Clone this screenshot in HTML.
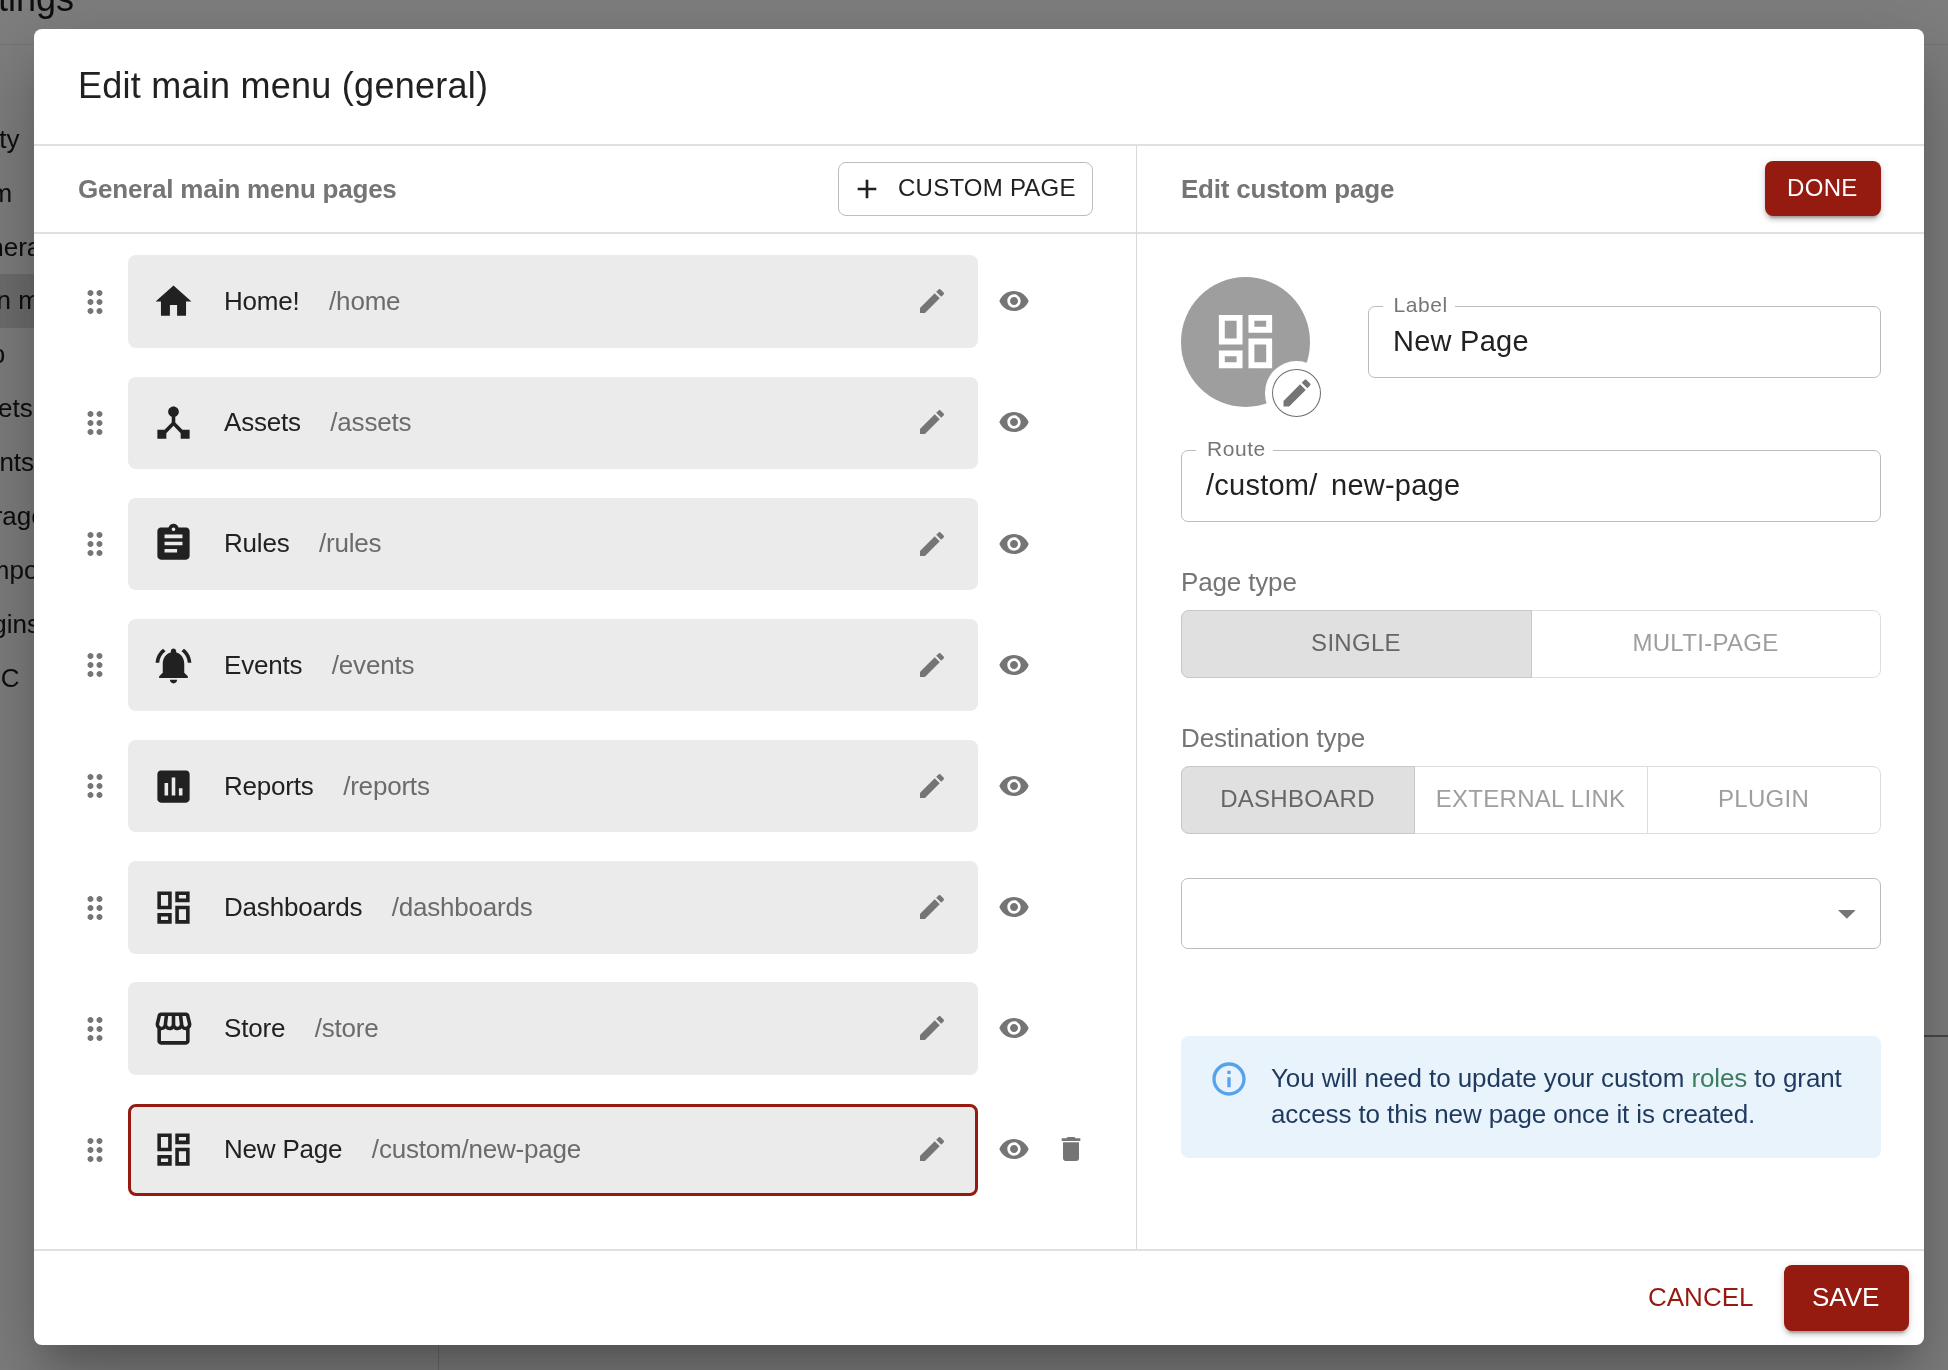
<!DOCTYPE html>
<html lang="en">
<head>
<meta charset="utf-8">
<title>Edit main menu (general)</title>
<style>
*{box-sizing:border-box;margin:0;padding:0}
html,body{width:1948px;height:1370px;overflow:hidden}
body{position:relative;background:#7f7f7f;font-family:"Liberation Sans",Arial,Helvetica,sans-serif;color:#212121;-webkit-font-smoothing:antialiased}
.abs{position:absolute}
svg{display:block;position:absolute}
/* background page (under backdrop) */
.bg-title{left:-56px;top:-22.6px;font-size:36px;line-height:44px;color:#0e0e0e;white-space:nowrap}
.bg-hline{left:0;top:44px;width:1948px;height:1px;background:#747474}
.bg-vline{left:438px;top:1300px;width:1px;height:70px;background:#6e6e6e}
.bg-hline2{left:1900px;top:1035px;width:48px;height:2px;background:#4a4a4a}
.bg-sel{left:0;top:274px;width:60px;height:54px;background:#707070}
.side{left:0;width:34px;height:54px;overflow:hidden;font-size:26px;line-height:54px;color:#0e0e0e;white-space:nowrap}
/* dialog */
.dialog{left:34px;top:29px;width:1890px;height:1316px;background:#fff;border-radius:8px;
 box-shadow:0 22px 30px -14px rgba(0,0,0,.2),0 48px 76px 6px rgba(0,0,0,.14),0 18px 92px 16px rgba(0,0,0,.12)}
.title{left:78px;top:64px;font-size:36px;line-height:44px;white-space:nowrap;color:#212121;letter-spacing:.25px}
.hl{background:#e0e0e0;height:2px}
.vl{background:#e0e0e0;width:2px}
.sub{font-weight:700;font-size:26px;line-height:32px;color:#757575;white-space:nowrap;letter-spacing:-.22px}
.btn{border-radius:8px}
.btn.out{border:1px solid #bdbdbd}
.btxt{font-size:24px;line-height:32px;white-space:nowrap}
.fbtxt{font-size:26px;line-height:32px;white-space:nowrap}
.btn.red{background:#951b10;color:#fff;box-shadow:0 6px 2px -4px rgba(0,0,0,.2),0 4px 4px 0 rgba(0,0,0,.14),0 2px 10px 0 rgba(0,0,0,.12)}
/* list */
.item{left:128px;width:850px;height:92px;background:#ebebeb;border-radius:8px}
.item.sel{border:3px solid #951b10}
.lbl{font-size:26px;line-height:32px;white-space:nowrap;color:#212121;letter-spacing:-.2px}
.rt{color:#6b6b6b;margin-left:29.5px}
/* right panel */
.field{border:1px solid #bcbcbc;border-radius:7px}
.flabel{font-size:21px;line-height:24px;color:#757575;background:#fff;padding:0 0 0 11px;white-space:nowrap;letter-spacing:.55px}
.ftext{font-size:29px;line-height:36px;white-space:nowrap;color:#212121;letter-spacing:.25px}
.cap{font-size:26px;line-height:32px;color:#757575;white-space:nowrap;letter-spacing:-.15px}
.tg{border:1px solid #dedede;border-radius:8px}
.tb{top:-1px;height:68px;padding-right:1px;font-size:24px;line-height:65px;text-align:center;color:#9e9e9e;white-space:nowrap;letter-spacing:.3px}
.tb.on{background:#e0e0e0;color:#666;border:1px solid #c8c8c8;border-radius:8px 0 0 8px;left:-1px;line-height:63px}
.tb.mid{border-right:1px solid #dedede}
.alert{left:1181px;top:1036px;width:700px;height:122px;background:#e9f3fc;border-radius:8px}
.atext{left:1271px;top:1060px;font-size:26px;line-height:36px;color:#1f3a5f;white-space:nowrap;letter-spacing:-.1px}
.atext span{color:#3c7c60}
</style>
</head>
<body>
<div id="root" style="position:absolute;left:0;top:0;width:1948px;height:1370px;overflow:hidden;will-change:transform">
<!-- page behind the backdrop -->
<div class="abs bg-title">Settings</div>
<div class="abs bg-hline"></div>
<div class="abs bg-vline"></div>
<div class="abs bg-hline2"></div>
<div class="abs bg-sel"></div>
<div class="abs side" style="top:111.7px"><span style="position:relative;left:-74.5px">Security</span></div>
<div class="abs side" style="top:165.6px"><span style="position:relative;left:-74.5px">System</span></div>
<div class="abs side" style="top:219.5px"><span style="position:relative;left:-45.4px">General</span></div>
<div class="abs side" style="top:273.4px"><span style="position:relative;left:-45.4px">Main menu</span></div>
<div class="abs side" style="top:327.3px"><span style="position:relative;left:-45.4px">Map</span></div>
<div class="abs side" style="top:381.2px"><span style="position:relative;left:-45.4px">Assets</span></div>
<div class="abs side" style="top:435.1px"><span style="position:relative;left:-45.4px">Events</span></div>
<div class="abs side" style="top:489.0px"><span style="position:relative;left:-45.4px">Storage</span></div>
<div class="abs side" style="top:542.9px"><span style="position:relative;left:-45.4px">Components</span></div>
<div class="abs side" style="top:596.8px"><span style="position:relative;left:-45.4px">Plugins</span></div>
<div class="abs side" style="top:650.7px"><span style="position:relative;left:-45.4px">OIDC</span></div>

<!-- dialog -->
<div class="abs dialog"></div>
<div class="abs title">Edit main menu (general)</div>
<div class="abs hl" style="left:34px;top:144px;width:1890px"></div>
<div class="abs hl" style="left:34px;top:232px;width:1890px"></div>
<div class="abs hl" style="left:34px;top:1249px;width:1890px"></div>
<div class="abs vl" style="left:1136px;top:146px;height:1103px;width:1px;background:#d9d9d9"></div>

<div class="abs sub" style="left:78px;top:173px">General main menu pages</div>
<div class="abs sub" style="left:1181px;top:173px">Edit custom page</div>

<div class="abs item" style="top:255px;height:92.5px"></div>
<svg viewBox="0 0 24 24" width="36" height="36" style="left:77px;top:283.85px" fill="#757575"><path d="M11 18c0 1.1-.9 2-2 2s-2-.9-2-2 .9-2 2-2 2 .9 2 2zm-2-8c-1.1 0-2 .9-2 2s.9 2 2 2 2-.9 2-2-.9-2-2-2zm0-6c-1.1 0-2 .9-2 2s.9 2 2 2 2-.9 2-2-.9-2-2-2zm6 4c1.1 0 2-.9 2-2s-.9-2-2-2-2 .9-2 2 .9 2 2 2zm0 2c-1.1 0-2 .9-2 2s.9 2 2 2 2-.9 2-2-.9-2-2-2zm0 6c-1.1 0-2 .9-2 2s.9 2 2 2 2-.9 2-2-.9-2-2-2z"/></svg>
<svg viewBox="0 0 24 24" width="43" height="43" style="left:152px;top:280.05px" fill="#212121"><path d="M10 20v-6h4v6h5v-8h3L12 3 2 12h3v8z"/></svg>
<div class="abs lbl" style="left:224px;top:284.90px">Home!<span class="rt">/home</span></div>
<svg viewBox="0 0 24 24" width="32" height="32" style="left:916px;top:285.25px" fill="#757575"><path d="M3 17.250V21h3.750L17.810 9.940l-3.750-3.750L3 17.250zM20.710 7.040c.390-.390.390-1.020 0-1.410l-2.340-2.340c-.390-.390-1.020-.390-1.410 0l-1.830 1.830 3.750 3.750 1.830-1.830z"/></svg>
<svg viewBox="0 0 24 24" width="32" height="32" style="left:998.25px;top:285.25px" fill="#757575"><path d="M12 4.500C7 4.500 2.730 7.610 1 12c1.730 4.390 6 7.500 11 7.500s9.270-3.110 11-7.500c-1.730-4.390-6-7.500-11-7.500zM12 17c-2.760 0-5-2.240-5-5s2.240-5 5-5 5 2.240 5 5-2.240 5-5 5zm0-8c-1.660 0-3 1.340-3 3s1.340 3 3 3 3-1.340 3-3-1.340-3-3-3z"/></svg>
<div class="abs item" style="top:377px;height:91.75px"></div>
<svg viewBox="0 0 24 24" width="36" height="36" style="left:77px;top:405px" fill="#757575"><path d="M11 18c0 1.1-.9 2-2 2s-2-.9-2-2 .9-2 2-2 2 .9 2 2zm-2-8c-1.1 0-2 .9-2 2s.9 2 2 2 2-.9 2-2-.9-2-2-2zm0-6c-1.1 0-2 .9-2 2s.9 2 2 2 2-.9 2-2-.9-2-2-2zm6 4c1.1 0 2-.9 2-2s-.9-2-2-2-2 .9-2 2 .9 2 2 2zm0 2c-1.1 0-2 .9-2 2s.9 2 2 2 2-.9 2-2-.9-2-2-2zm0 6c-1.1 0-2 .9-2 2s.9 2 2 2 2-.9 2-2-.9-2-2-2z"/></svg>
<svg viewBox="0 0 24 24" width="43" height="43" style="left:152px;top:401.2px" fill="#212121"><path d="M17 16l-4-4V8.820C14.160 8.400 15 7.300 15 6c0-1.660-1.340-3-3-3S9 4.340 9 6c0 1.300.840 2.400 2 2.820V12l-4 4H3v5h5v-3.050l4-4.200 4 4.200V21h5v-5h-4z"/></svg>
<div class="abs lbl" style="left:224px;top:406.10px">Assets<span class="rt">/assets</span></div>
<svg viewBox="0 0 24 24" width="32" height="32" style="left:916px;top:406.4px" fill="#757575"><path d="M3 17.250V21h3.750L17.810 9.940l-3.750-3.750L3 17.250zM20.710 7.040c.390-.390.390-1.020 0-1.410l-2.340-2.340c-.390-.390-1.020-.390-1.410 0l-1.830 1.830 3.750 3.750 1.830-1.830z"/></svg>
<svg viewBox="0 0 24 24" width="32" height="32" style="left:998.25px;top:406.4px" fill="#757575"><path d="M12 4.500C7 4.500 2.730 7.610 1 12c1.730 4.390 6 7.500 11 7.500s9.270-3.110 11-7.500c-1.730-4.390-6-7.500-11-7.500zM12 17c-2.760 0-5-2.240-5-5s2.240-5 5-5 5 2.240 5 5-2.240 5-5 5zm0-8c-1.660 0-3 1.340-3 3s1.340 3 3 3 3-1.340 3-3-1.340-3-3-3z"/></svg>
<div class="abs item" style="top:498px;height:91.5px"></div>
<svg viewBox="0 0 24 24" width="36" height="36" style="left:77px;top:526.15px" fill="#757575"><path d="M11 18c0 1.1-.9 2-2 2s-2-.9-2-2 .9-2 2-2 2 .9 2 2zm-2-8c-1.1 0-2 .9-2 2s.9 2 2 2 2-.9 2-2-.9-2-2-2zm0-6c-1.1 0-2 .9-2 2s.9 2 2 2 2-.9 2-2-.9-2-2-2zm6 4c1.1 0 2-.9 2-2s-.9-2-2-2-2 .9-2 2 .9 2 2 2zm0 2c-1.1 0-2 .9-2 2s.9 2 2 2 2-.9 2-2-.9-2-2-2zm0 6c-1.1 0-2 .9-2 2s.9 2 2 2 2-.9 2-2-.9-2-2-2z"/></svg>
<svg viewBox="0 0 24 24" width="43" height="43" style="left:152px;top:522.35px" fill="#212121"><path d="M19 3h-4.180C14.400 1.840 13.300 1 12 1c-1.300 0-2.400.840-2.820 2H5c-1.100 0-2 .900-2 2v14c0 1.100.900 2 2 2h14c1.100 0 2-.900 2-2V5c0-1.100-.900-2-2-2zm-7 0c.550 0 1 .450 1 1s-.450 1-1 1-1-.450-1-1 .450-1 1-1zm2 14H7v-2h7v2zm3-4H7v-2h10v2zm0-4H7V7h10v2z"/></svg>
<div class="abs lbl" style="left:224px;top:527.30px">Rules<span class="rt">/rules</span></div>
<svg viewBox="0 0 24 24" width="32" height="32" style="left:916px;top:527.55px" fill="#757575"><path d="M3 17.250V21h3.750L17.810 9.940l-3.750-3.750L3 17.250zM20.710 7.040c.390-.390.390-1.020 0-1.410l-2.340-2.340c-.390-.390-1.020-.390-1.410 0l-1.830 1.830 3.750 3.750 1.830-1.830z"/></svg>
<svg viewBox="0 0 24 24" width="32" height="32" style="left:998.25px;top:527.55px" fill="#757575"><path d="M12 4.500C7 4.500 2.730 7.610 1 12c1.730 4.390 6 7.500 11 7.500s9.270-3.110 11-7.500c-1.730-4.390-6-7.500-11-7.500zM12 17c-2.760 0-5-2.240-5-5s2.240-5 5-5 5 2.240 5 5-2.240 5-5 5zm0-8c-1.660 0-3 1.340-3 3s1.340 3 3 3 3-1.340 3-3-1.340-3-3-3z"/></svg>
<div class="abs item" style="top:619px;height:91.75px"></div>
<svg viewBox="0 0 24 24" width="36" height="36" style="left:77px;top:647.3px" fill="#757575"><path d="M11 18c0 1.1-.9 2-2 2s-2-.9-2-2 .9-2 2-2 2 .9 2 2zm-2-8c-1.1 0-2 .9-2 2s.9 2 2 2 2-.9 2-2-.9-2-2-2zm0-6c-1.1 0-2 .9-2 2s.9 2 2 2 2-.9 2-2-.9-2-2-2zm6 4c1.1 0 2-.9 2-2s-.9-2-2-2-2 .9-2 2 .9 2 2 2zm0 2c-1.1 0-2 .9-2 2s.9 2 2 2 2-.9 2-2-.9-2-2-2zm0 6c-1.1 0-2 .9-2 2s.9 2 2 2 2-.9 2-2-.9-2-2-2z"/></svg>
<svg viewBox="0 0 24 24" width="43" height="43" style="left:152px;top:643.5px" fill="#212121"><path d="M7.580 4.080L6.150 2.650C3.750 4.480 2.170 7.300 2.030 10.500h2c.150-2.650 1.510-4.970 3.550-6.420zm12.390 6.420h2c-.150-3.200-1.730-6.020-4.120-7.850l-1.420 1.430c2.020 1.450 3.390 3.770 3.540 6.420zM18 11c0-3.070-1.640-5.640-4.500-6.320V4c0-.830-.670-1.500-1.500-1.500s-1.500.670-1.500 1.500v.680C7.630 5.360 6 7.920 6 11v5l-2 2v1h16v-1l-2-2v-5zm-6 11c.140 0 .270-.010.400-.040.650-.140 1.180-.580 1.440-1.180.100-.240.150-.500.150-.780h-4c.010 1.100.900 2 2.010 2z"/></svg>
<div class="abs lbl" style="left:224px;top:648.50px">Events<span class="rt">/events</span></div>
<svg viewBox="0 0 24 24" width="32" height="32" style="left:916px;top:648.7px" fill="#757575"><path d="M3 17.250V21h3.750L17.810 9.940l-3.750-3.750L3 17.250zM20.710 7.040c.390-.390.390-1.020 0-1.410l-2.340-2.340c-.390-.390-1.020-.390-1.410 0l-1.830 1.830 3.750 3.750 1.830-1.830z"/></svg>
<svg viewBox="0 0 24 24" width="32" height="32" style="left:998.25px;top:648.7px" fill="#757575"><path d="M12 4.500C7 4.500 2.730 7.610 1 12c1.730 4.390 6 7.500 11 7.500s9.270-3.110 11-7.500c-1.730-4.390-6-7.500-11-7.500zM12 17c-2.760 0-5-2.240-5-5s2.240-5 5-5 5 2.240 5 5-2.240 5-5 5zm0-8c-1.660 0-3 1.340-3 3s1.340 3 3 3 3-1.340 3-3-1.340-3-3-3z"/></svg>
<div class="abs item" style="top:740px;height:92px"></div>
<svg viewBox="0 0 24 24" width="36" height="36" style="left:77px;top:768.45px" fill="#757575"><path d="M11 18c0 1.1-.9 2-2 2s-2-.9-2-2 .9-2 2-2 2 .9 2 2zm-2-8c-1.1 0-2 .9-2 2s.9 2 2 2 2-.9 2-2-.9-2-2-2zm0-6c-1.1 0-2 .9-2 2s.9 2 2 2 2-.9 2-2-.9-2-2-2zm6 4c1.1 0 2-.9 2-2s-.9-2-2-2-2 .9-2 2 .9 2 2 2zm0 2c-1.1 0-2 .9-2 2s.9 2 2 2 2-.9 2-2-.9-2-2-2zm0 6c-1.1 0-2 .9-2 2s.9 2 2 2 2-.9 2-2-.9-2-2-2z"/></svg>
<svg viewBox="0 0 24 24" width="43" height="43" style="left:152px;top:764.65px" fill="#212121"><path d="M19 3H5c-1.100 0-2 .900-2 2v14c0 1.100.900 2 2 2h14c1.100 0 2-.900 2-2V5c0-1.100-.900-2-2-2zM9 17H7v-7h2v7zm4 0h-2V7h2v10zm4 0h-2v-4h2v4z"/></svg>
<div class="abs lbl" style="left:224px;top:769.70px">Reports<span class="rt">/reports</span></div>
<svg viewBox="0 0 24 24" width="32" height="32" style="left:916px;top:769.85px" fill="#757575"><path d="M3 17.250V21h3.750L17.810 9.940l-3.750-3.750L3 17.250zM20.710 7.040c.390-.390.390-1.020 0-1.410l-2.340-2.340c-.390-.390-1.020-.390-1.410 0l-1.830 1.830 3.750 3.750 1.830-1.830z"/></svg>
<svg viewBox="0 0 24 24" width="32" height="32" style="left:998.25px;top:769.85px" fill="#757575"><path d="M12 4.500C7 4.500 2.730 7.610 1 12c1.730 4.390 6 7.500 11 7.500s9.270-3.110 11-7.500c-1.730-4.390-6-7.500-11-7.500zM12 17c-2.760 0-5-2.240-5-5s2.240-5 5-5 5 2.240 5 5-2.240 5-5 5zm0-8c-1.660 0-3 1.340-3 3s1.340 3 3 3 3-1.340 3-3-1.340-3-3-3z"/></svg>
<div class="abs item" style="top:861px;height:92.75px"></div>
<svg viewBox="0 0 24 24" width="36" height="36" style="left:77px;top:889.6px" fill="#757575"><path d="M11 18c0 1.1-.9 2-2 2s-2-.9-2-2 .9-2 2-2 2 .9 2 2zm-2-8c-1.1 0-2 .9-2 2s.9 2 2 2 2-.9 2-2-.9-2-2-2zm0-6c-1.1 0-2 .9-2 2s.9 2 2 2 2-.9 2-2-.9-2-2-2zm6 4c1.1 0 2-.9 2-2s-.9-2-2-2-2 .9-2 2 .9 2 2 2zm0 2c-1.1 0-2 .9-2 2s.9 2 2 2 2-.9 2-2-.9-2-2-2zm0 6c-1.1 0-2 .9-2 2s.9 2 2 2 2-.9 2-2-.9-2-2-2z"/></svg>
<svg viewBox="0 0 24 24" width="43" height="43" style="left:152px;top:885.8px" fill="#212121"><path d="M19 5v2h-4V5h4M9 5v6H5V5h4m10 8v6h-4v-6h4M9 17v2H5v-2h4M21 3h-8v6h8V3zM11 3H3v10h8V3zm10 8h-8v10h8V11zm-10 4H3v6h8v-6z"/></svg>
<div class="abs lbl" style="left:224px;top:890.90px">Dashboards<span class="rt">/dashboards</span></div>
<svg viewBox="0 0 24 24" width="32" height="32" style="left:916px;top:891px" fill="#757575"><path d="M3 17.250V21h3.750L17.810 9.940l-3.750-3.750L3 17.250zM20.710 7.040c.390-.390.390-1.020 0-1.410l-2.340-2.340c-.390-.390-1.020-.390-1.410 0l-1.830 1.830 3.750 3.750 1.830-1.830z"/></svg>
<svg viewBox="0 0 24 24" width="32" height="32" style="left:998.25px;top:891px" fill="#757575"><path d="M12 4.500C7 4.500 2.730 7.610 1 12c1.730 4.390 6 7.500 11 7.500s9.270-3.110 11-7.500c-1.730-4.390-6-7.500-11-7.500zM12 17c-2.760 0-5-2.240-5-5s2.240-5 5-5 5 2.240 5 5-2.240 5-5 5zm0-8c-1.660 0-3 1.340-3 3s1.340 3 3 3 3-1.340 3-3-1.340-3-3-3z"/></svg>
<div class="abs item" style="top:982px;height:92.6px"></div>
<svg viewBox="0 0 24 24" width="36" height="36" style="left:77px;top:1010.75px" fill="#757575"><path d="M11 18c0 1.1-.9 2-2 2s-2-.9-2-2 .9-2 2-2 2 .9 2 2zm-2-8c-1.1 0-2 .9-2 2s.9 2 2 2 2-.9 2-2-.9-2-2-2zm0-6c-1.1 0-2 .9-2 2s.9 2 2 2 2-.9 2-2-.9-2-2-2zm6 4c1.1 0 2-.9 2-2s-.9-2-2-2-2 .9-2 2 .9 2 2 2zm0 2c-1.1 0-2 .9-2 2s.9 2 2 2 2-.9 2-2-.9-2-2-2zm0 6c-1.1 0-2 .9-2 2s.9 2 2 2 2-.9 2-2-.9-2-2-2z"/></svg>
<svg viewBox="0 0 24 24" width="43" height="43" style="left:152px;top:1006.95px" fill="#212121"><path d="M21.900 8.890l-1.050-4.370c-.220-.900-1-1.520-1.910-1.520H5.050c-.900 0-1.690.630-1.900 1.520L2.100 8.890c-.240 1.020-.020 2.060.620 2.880.080.110.190.190.280.290V19c0 1.100.900 2 2 2h14c1.100 0 2-.900 2-2v-6.940c.090-.090.200-.180.280-.280.640-.820.870-1.870.620-2.890zm-2.990-3.900l1.050 4.370c.100.420.010.840-.250 1.170-.140.180-.440.470-.940.470-.610 0-1.140-.490-1.210-1.140L16.980 5l1.930-.010zM13 5h1.960l.540 4.520c.050.390-.070.780-.330 1.070-.220.260-.540.410-.950.410-.670 0-1.220-.590-1.220-1.310V5zM8.490 9.520L9.040 5H11v4.690c0 .720-.550 1.310-1.290 1.310-.340 0-.650-.150-.890-.410-.250-.290-.370-.680-.330-1.070zm-4.450-.160L5.050 5h1.970l-.580 4.860c-.080.650-.600 1.140-1.210 1.140-.490 0-.800-.290-.930-.470-.270-.320-.360-.750-.260-1.170zM5 19v-6.030c.080.010.150.030.230.030.870 0 1.660-.360 2.240-.950.600.600 1.400.950 2.310.950.870 0 1.650-.360 2.230-.930.590.570 1.390.930 2.290.930.840 0 1.640-.350 2.240-.950.580.590 1.370.950 2.240.950.080 0 .150-.020.230-.030V19H5z"/></svg>
<div class="abs lbl" style="left:224px;top:1012.10px">Store<span class="rt">/store</span></div>
<svg viewBox="0 0 24 24" width="32" height="32" style="left:916px;top:1012.15px" fill="#757575"><path d="M3 17.250V21h3.750L17.810 9.940l-3.750-3.750L3 17.250zM20.710 7.040c.390-.390.390-1.020 0-1.410l-2.340-2.340c-.390-.390-1.020-.390-1.410 0l-1.830 1.830 3.750 3.750 1.830-1.830z"/></svg>
<svg viewBox="0 0 24 24" width="32" height="32" style="left:998.25px;top:1012.15px" fill="#757575"><path d="M12 4.500C7 4.500 2.730 7.610 1 12c1.730 4.390 6 7.500 11 7.500s9.270-3.110 11-7.500c-1.730-4.390-6-7.500-11-7.500zM12 17c-2.760 0-5-2.240-5-5s2.240-5 5-5 5 2.240 5 5-2.240 5-5 5zm0-8c-1.660 0-3 1.340-3 3s1.340 3 3 3 3-1.340 3-3-1.340-3-3-3z"/></svg>
<div class="abs item sel" style="top:1104px;height:92px"></div>
<svg viewBox="0 0 24 24" width="36" height="36" style="left:77px;top:1131.9px" fill="#757575"><path d="M11 18c0 1.1-.9 2-2 2s-2-.9-2-2 .9-2 2-2 2 .9 2 2zm-2-8c-1.1 0-2 .9-2 2s.9 2 2 2 2-.9 2-2-.9-2-2-2zm0-6c-1.1 0-2 .9-2 2s.9 2 2 2 2-.9 2-2-.9-2-2-2zm6 4c1.1 0 2-.9 2-2s-.9-2-2-2-2 .9-2 2 .9 2 2 2zm0 2c-1.1 0-2 .9-2 2s.9 2 2 2 2-.9 2-2-.9-2-2-2zm0 6c-1.1 0-2 .9-2 2s.9 2 2 2 2-.9 2-2-.9-2-2-2z"/></svg>
<svg viewBox="0 0 24 24" width="43" height="43" style="left:152px;top:1128.1px" fill="#212121"><path d="M19 5v2h-4V5h4M9 5v6H5V5h4m10 8v6h-4v-6h4M9 17v2H5v-2h4M21 3h-8v6h8V3zM11 3H3v10h8V3zm10 8h-8v10h8V11zm-10 4H3v6h8v-6z"/></svg>
<div class="abs lbl" style="left:224px;top:1133.30px">New Page<span class="rt">/custom/new-page</span></div>
<svg viewBox="0 0 24 24" width="32" height="32" style="left:916px;top:1133.3px" fill="#757575"><path d="M3 17.250V21h3.750L17.810 9.940l-3.750-3.750L3 17.250zM20.710 7.040c.390-.390.390-1.020 0-1.410l-2.340-2.340c-.390-.390-1.020-.390-1.410 0l-1.830 1.830 3.750 3.750 1.830-1.830z"/></svg>
<svg viewBox="0 0 24 24" width="32" height="32" style="left:998.25px;top:1133.3px" fill="#757575"><path d="M12 4.500C7 4.500 2.730 7.610 1 12c1.730 4.390 6 7.500 11 7.500s9.270-3.110 11-7.500c-1.730-4.390-6-7.500-11-7.500zM12 17c-2.760 0-5-2.240-5-5s2.240-5 5-5 5 2.240 5 5-2.240 5-5 5zm0-8c-1.660 0-3 1.340-3 3s1.340 3 3 3 3-1.340 3-3-1.340-3-3-3z"/></svg>
<svg viewBox="0 0 24 24" width="32" height="32" style="left:1055.3px;top:1133.3px" fill="#757575"><path d="M6 19c0 1.100.900 2 2 2h8c1.100 0 2-.900 2-2V7H6v12zM19 4h-3.500l-1-1h-5l-1 1H5v2h14V4z"/></svg>
<div class="abs btn out" style="left:838px;top:162px;width:255px;height:54px"></div>
<svg viewBox="0 0 24 24" width="32" height="32" style="left:851.25px;top:173.15px" fill="#212121"><path d="M19 13h-6v6h-2v-6H5v-2h6V5h2v6h6v2z"/></svg>
<div class="abs btxt" style="left:898px;top:172px;color:#212121;letter-spacing:.24px">CUSTOM PAGE</div>
<div class="abs btn red" style="left:1765px;top:161px;width:116px;height:55px"></div>
<div class="abs btxt" style="left:1787px;top:172px;color:#fff;letter-spacing:.33px">DONE</div>
<div class="abs" style="left:1180.7px;top:276.8px;width:129.5px;height:130px;border-radius:50%;background:#9e9e9e"></div>
<svg viewBox="0 0 24 24" width="71" height="71" style="left:1209.9px;top:306.1px" fill="#fff"><path d="M19 5v2h-4V5h4M9 5v6H5V5h4m10 8v6h-4v-6h4M9 17v2H5v-2h4M21 3h-8v6h8V3zM11 3H3v10h8V3zm10 8h-8v10h8V11zm-10 4H3v6h8v-6z"/></svg>
<div class="abs" style="left:1264.8px;top:361.2px;width:63.5px;height:63.5px;border-radius:50%;background:#fff"></div>
<div class="abs" style="left:1272px;top:369px;width:49px;height:48px;border-radius:50%;background:#fff;border:1px solid #6e6e6e"></div>
<svg viewBox="0 0 24 24" width="36" height="36" style="left:1278.5px;top:375px" fill="#757575"><path d="M3 17.250V21h3.750L17.810 9.940l-3.750-3.750L3 17.250zM20.710 7.040c.390-.390.390-1.020 0-1.410l-2.340-2.340c-.390-.390-1.020-.390-1.410 0l-1.830 1.830 3.750 3.750 1.830-1.830z"/></svg>
<div class="abs field" style="left:1368px;top:306px;width:513px;height:72px"></div>
<div class="abs flabel" style="left:1382.5px;top:293px;width:72px">Label</div>
<div class="abs ftext" style="left:1393px;top:323px">New Page</div>
<div class="abs field" style="left:1181px;top:450px;width:700px;height:72px"></div>
<div class="abs flabel" style="left:1196px;top:437px;width:77px">Route</div>
<div class="abs ftext" style="left:1206px;top:467px">/custom/</div>
<div class="abs ftext" style="left:1331px;top:467px">new-page</div>
<div class="abs cap" style="left:1181px;top:566px">Page type</div>
<div class="abs tg" style="left:1181px;top:610px;width:700px;height:68px"><div class="abs tb on" style="width:351px">SINGLE</div><div class="abs tb" style="left:350px;width:348px">MULTI-PAGE</div></div>
<div class="abs cap" style="left:1181px;top:722px">Destination type</div>
<div class="abs tg" style="left:1181px;top:766px;width:700px;height:68px"><div class="abs tb on" style="width:234px">DASHBOARD</div><div class="abs tb mid" style="left:233px;width:233px">EXTERNAL LINK</div><div class="abs tb" style="left:466px;width:232px">PLUGIN</div></div>
<div class="abs field" style="left:1181px;top:878px;width:700px;height:71px"></div>
<svg viewBox="0 0 20 10" width="17.6" height="8.9" style="left:1837.8px;top:910px" fill="#757575"><path d="M0 0l10 10 10-10z"/></svg>
<div class="abs alert"></div>
<svg viewBox="0 0 24 24" width="40" height="40" style="left:1208.75px;top:1058.75px" fill="#56a2ef"><path d="M11 7h2v2h-2zm0 4h2v6h-2zm1-9C6.480 2 2 6.480 2 12s4.480 10 10 10 10-4.480 10-10S17.520 2 12 2zm0 18c-4.410 0-8-3.590-8-8s3.590-8 8-8 8 3.590 8 8-3.590 8-8 8z"/></svg>
<div class="abs atext">You will need to update your custom <span>roles</span> to grant<br>access to this new page once it is created.</div>
<div class="abs fbtxt" style="left:1648px;top:1281px;color:#951b10">CANCEL</div>
<div class="abs btn red" style="left:1784px;top:1265px;width:125px;height:66px"></div>
<div class="abs fbtxt" style="left:1812px;top:1281px;color:#fff">SAVE</div>
</div>
</body>
</html>
